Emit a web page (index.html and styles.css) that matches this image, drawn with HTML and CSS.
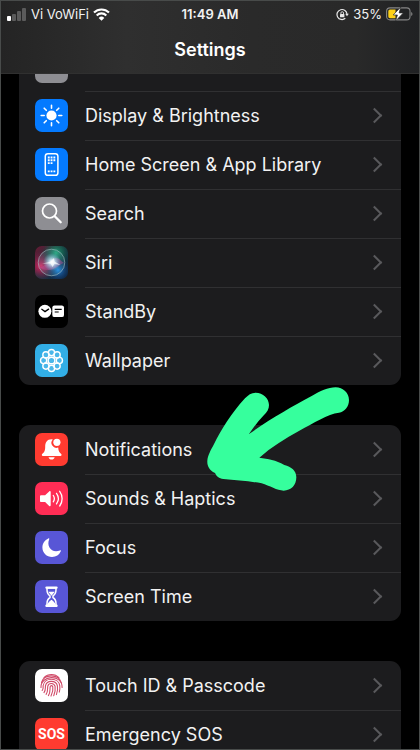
FILE: index.html
```html
<!DOCTYPE html>
<html lang="en">
<head>
  <meta charset="UTF-8">
  <meta name="viewport" content="width=device-width, initial-scale=1.0">
  <title>Settings</title>
  <link rel="stylesheet" href="styles.css">
</head>
<body>
  <div class="screen">
    <header class="header">
      <div class="status-bar">
        <div class="status-left">
          <svg class="signal" width="20" height="13" viewBox="0 0 20 13">
            <rect x="0" y="8" width="4" height="5" rx="1" fill="#fff"/>
            <rect x="5" y="6" width="4" height="7" rx="1" fill="#5b5b5b"/>
            <rect x="10" y="3" width="4" height="10" rx="1" fill="#5b5b5b"/>
            <rect x="15" y="0" width="4" height="13" rx="1" fill="#5b5b5b"/>
          </svg>
          <span>Vi VoWiFi</span>
          <svg width="17" height="13" viewBox="0 0 17 13">
            <path d="M1 4.6a10.6 10.6 0 0 1 15 0M3.7 7.4a6.8 6.8 0 0 1 9.6 0" fill="none" stroke="#fff" stroke-width="2.1"/>
            <path d="M8.5 12.8 5.7 9.9a4 4 0 0 1 5.6 0z" fill="#fff"/>
          </svg>
        </div>
        <span class="time">11:49 AM</span>
        <div class="status-right">
          <svg width="13" height="13" viewBox="0 0 13 13">
            <path d="M11 6.3A5 5 0 1 0 9.3 10.3" fill="none" stroke="#e8e8e8" stroke-width="1.2"/>
            <path d="M9.2 5.8h3.6L11 8.3z" fill="#e8e8e8"/>
            <rect x="4" y="6" width="4.4" height="3.2" rx=".5" fill="#e8e8e8"/>
            <path d="M4.9 6V5a1.3 1.3 0 0 1 2.6 0v1" fill="none" stroke="#e8e8e8" stroke-width=".9"/>
          </svg>
          <span>35%</span>
          <svg class="battery" width="27" height="14" viewBox="0 0 27 14">
            <rect x=".6" y=".9" width="23.4" height="12" rx="3.4" fill="none" stroke="#858585" stroke-width="1.1"/>
            <path d="M25.2 5c1.7.7 1.7 3.2 0 4z" fill="#858585"/>
            <path d="M4 2.5h5.5v8.8H4A1.7 1.7 0 0 1 2.3 9.6V4.2A1.7 1.7 0 0 1 4 2.5z" fill="#fdd017"/>
            <path d="M14.8 0 7.2 8h4.2L9.6 14 17.3 5.9h-4.2z" fill="#fff" stroke="#2b2b2b" stroke-width=".7"/>
          </svg>
        </div>
      </div>
      <h1 class="title">Settings</h1>
    </header>

    <main class="list">
      <section class="group">
        <div class="row">
          <span class="icon gray"></span>
        </div>
        <a class="row" href="#display">
          <svg class="icon blue" viewBox="0 0 33 33">
            <circle cx="16.5" cy="16.5" r="5.1" fill="#fff"/>
            <path d="M16.5 6.2v3M16.5 23.8v3M6.2 16.5h3M23.8 16.5h3M9.2 9.2l2.1 2.1M21.7 21.7l2.1 2.1M9.2 23.8l2.1-2.1M21.7 11.3l2.1-2.1" stroke="#fff" stroke-width="1.6" stroke-linecap="round"/>
          </svg>
          <span class="label">Display &amp; Brightness</span>
        </a>
        <a class="row" href="#home-screen">
          <svg class="icon blue" viewBox="0 0 33 33">
            <rect x="10.3" y="5.7" width="12.6" height="21.6" rx="2.6" fill="none" stroke="#fff" stroke-width="1.5"/>
            <path d="M12.8 9.5h8M12.8 12.3h8M12.8 15.1h5.2M12.8 23.4h8" stroke="#fff" stroke-width="1.9" stroke-dasharray="1.9 .9"/>
          </svg>
          <span class="label">Home Screen &amp; App Library</span>
        </a>
        <a class="row" href="#search">
          <svg class="icon gray" viewBox="0 0 33 33">
            <circle cx="14.5" cy="14" r="7" fill="none" stroke="#fff" stroke-width="1.7"/>
            <path d="M19.7 19.2l6 6" stroke="#fff" stroke-width="2.3" stroke-linecap="round"/>
          </svg>
          <span class="label">Search</span>
        </a>
        <a class="row" href="#siri">
          <svg class="icon" viewBox="0 0 33 33">
            <defs>
              <linearGradient id="siri-bg" x1="0" y1="0" x2="1" y2="1">
                <stop offset="0" stop-color="#6c1733"/>
                <stop offset=".45" stop-color="#18343c"/>
                <stop offset="1" stop-color="#0a2748"/>
              </linearGradient>
              <radialGradient id="siri-glow">
                <stop offset="0" stop-color="#fff"/>
                <stop offset=".25" stop-color="#d8f4ff" stop-opacity=".9"/>
                <stop offset="1" stop-color="#79c8e8" stop-opacity="0"/>
              </radialGradient>
              <radialGradient id="siri-red">
                <stop offset="0" stop-color="#e52463"/>
                <stop offset="1" stop-color="#8a1746" stop-opacity="0"/>
              </radialGradient>
              <radialGradient id="siri-green">
                <stop offset="0" stop-color="#23aa7c"/>
                <stop offset="1" stop-color="#0b5b48" stop-opacity="0"/>
              </radialGradient>
              <radialGradient id="siri-blue">
                <stop offset="0" stop-color="#1b8bea"/>
                <stop offset="1" stop-color="#17306e" stop-opacity="0"/>
              </radialGradient>
            </defs>
            <rect width="33" height="33" fill="url(#siri-bg)"/>
            <circle cx="6" cy="20" r="15" fill="url(#siri-red)"/>
            <circle cx="21" cy="7" r="14" fill="url(#siri-green)"/>
            <circle cx="23" cy="24" r="12" fill="url(#siri-blue)"/>
            <circle cx="16.5" cy="16.5" r="13.3" fill="#69b2bd" fill-opacity=".18" stroke="#a8c3c8" stroke-opacity=".65" stroke-width=".9"/>
            <path d="M4 21c7 1 8-8 17-9 3 0 5 3 8 5-5 1-9 8-17 7-3 0-5-1-8-3z" fill="#c54b99" fill-opacity=".45"/>
            <circle cx="17" cy="16" r="9" fill="url(#siri-glow)"/>
            <path d="M7 17.500l8-1.500 4-4 .5 3.500 6 3.500-6-1-2 3-2-3.500z" fill="#fff" fill-opacity=".7"/>
          </svg>
          <span class="label">Siri</span>
        </a>
        <a class="row" href="#standby">
          <svg class="icon black" viewBox="0 0 33 33">
            <circle cx="9.9" cy="16.3" r="6.5" fill="#fff"/>
            <path d="M6.8 14.3l3.2 2.3 3.6-2.5" fill="none" stroke="#000" stroke-width="1.3" stroke-linecap="round"/>
            <rect x="17.3" y="10.4" width="11.7" height="11.7" rx="2.2" fill="#fff"/>
            <path d="M19.7 14.3h7M19.7 17h4" stroke="#000" stroke-width="1.2"/>
          </svg>
          <span class="label">StandBy</span>
        </a>
        <a class="row" href="#wallpaper">
          <svg class="icon sky" viewBox="0 0 33 33">
            <g fill="#fff" fill-opacity=".12" stroke="#fff" stroke-width="1.4">
              <circle cx="16.5" cy="8.6" r="3.1"/>
              <circle cx="22.1" cy="10.9" r="3.1"/>
              <circle cx="24.4" cy="16.5" r="3.1"/>
              <circle cx="22.1" cy="22.1" r="3.1"/>
              <circle cx="16.5" cy="24.4" r="3.1"/>
              <circle cx="10.9" cy="22.1" r="3.1"/>
              <circle cx="8.6" cy="16.5" r="3.1"/>
              <circle cx="10.9" cy="10.9" r="3.1"/>
              <circle cx="16.5" cy="16.5" r="3.3"/>
            </g>
            <circle cx="16.5" cy="16.5" r="5" fill="none" stroke="#fff" stroke-width="1"/>
          </svg>
          <span class="label">Wallpaper</span>
        </a>
      </section>

      <section class="group">
        <a class="row" href="#notifications">
          <svg class="icon red" viewBox="0 0 33 33">
            <path d="M16.5 6.2c-4.5 0-6.3 3.4-6.3 7.3 0 4.3-.9 5.6-3 7.5-.7.7-.4 2 .7 2h17.600c1.1 0 1.4-1.3.7-2-1.9-1.7-2.8-3-3-6.500a5 5 0 0 1-5.400-8.100 7 7 0 0 0-1.300-.2zM13.500 24.200h6.200c-.5 1.500-1.600 2.300-3.100 2.300s-2.600-.8-3.100-2.300z" fill="#fff"/>
            <circle cx="21.9" cy="9.300" r="3.600" fill="#fff"/>
          </svg>
          <span class="label">Notifications</span>
        </a>
        <a class="row" href="#sounds">
          <svg class="icon pink" viewBox="0 0 33 33">
            <path d="M6.200 13.200h3.900l4.100-3.800c.7-.6 1.500-.3 1.500.6v13.300c0 .9-.8 1.200-1.500.6l-4.100-3.800H6.200c-.7 0-1.200-.5-1.200-1.200v-4.500c0-.7.5-1.200 1.200-1.200z" fill="#fff"/>
            <path d="M18.300 13.500c1.300 1.900 1.300 4.300 0 6.300M21.500 11.400c2.300 3.200 2.300 7.300 0 10.500M24.700 9.300c3.200 4.400 3.200 10.300 0 14.700" fill="none" stroke="#fff" stroke-width="1.300" stroke-linecap="round"/>
          </svg>
          <span class="label">Sounds &amp; Haptics</span>
        </a>
        <a class="row" href="#focus">
          <svg class="icon indigo" viewBox="0 0 33 33">
            <path d="M13.300 7.400c.7-.3 1.200.2.9.9-3.100 7.700 3 14.200 10.700 11.100.7-.3 1.200.3.900.9A9.600 9.600 0 0 1 17 26c-5.300 0-9.600-4.200-9.600-9.500 0-4.200 2.400-7.600 5.900-9.100z" fill="#fff"/>
          </svg>
          <span class="label">Focus</span>
        </a>
        <a class="row" href="#screen-time">
          <svg class="icon indigo" viewBox="0 0 33 33">
            <path d="M11.500 7.600h10M11.500 25.800h10" stroke="#fff" stroke-width="2.400" stroke-linecap="round"/>
            <path d="M12 8v1.800c0 3.100 1.200 5 3 6.100v1.600c-1.800 1.100-3 3-3 6.100v1.800h9v-1.800c0-3.100-1.200-5-3-6.100v-1.600c1.800-1.100 3-3 3-6.100V8z" fill="none" stroke="#fff" stroke-width="1.500"/>
            <path d="M13.200 11.800h6.600l-3.300 4zM12.500 25c.2-2.700 2.400-3.700 4-5.200 1.600 1.500 3.800 2.500 4 5.200z" fill="#fff"/>
          </svg>
          <span class="label">Screen Time</span>
        </a>

        <svg class="arrow" viewBox="51 48 429 318">
          <path d="M437 52c22 0 40 17 40 38 0 20-13 36-30 38-34 4-76 31-119 54-43 23-84 49-120 81 27 4 49 6 75 22 21 5 36 17 36 37 0 24-16 40-38 40-20 0-42-15-66-22-33-6-78-10-115-13-13-1-21-9-25-18-18-9-24-22-23-37 1-16 11-33 19-48 24-47 51-92 94-139 9-10 19-17 32-17 22 0 40 17 40 37 0 12-5 21-17 32-17 18-30 36-43 55 59-42 128-82 188-114 25-14 49-26 72-26z" fill="#36ff9d"/>
        </svg>
      </section>

      <section class="group">
        <a class="row" href="#touch-id">
          <svg class="icon white" viewBox="0 0 33 33">
            <g fill="none" stroke="#d04b69" stroke-width="1.100" stroke-linecap="round">
              <path d="M9 8.600c4.200-4.200 11-4.100 14.900.1"/>
              <path d="M6.500 13.500c2.600-8.800 17-8.800 19.700.1"/>
              <path d="M6 18.500c-.7-12.700 21.500-13.700 21.100 0"/>
              <path d="M7.200 21.500c1.500-1.700.7-3.200 1-5 1.100-8.500 15.700-8.400 16.600.4.200 2 .2 4-.5 6.200"/>
              <path d="M9 23.600c2-2.600 1.100-4.800 1.500-7 1.100-5.600 10.600-5.800 11.900.3.500 3 .2 6-1 8.700"/>
              <path d="M11.100 25.300c2.200-2.900 1.200-5.700 1.700-8.200.8-3.600 6.400-3.600 7.300.3.500 3.200-.1 6.300-1.400 9.300"/>
              <path d="M13.400 26.600c2.300-3.400 1.300-6.300 1.800-8.900.4-1.500 2.300-1.500 2.600.2.500 3.100-.3 6.300-1.800 9.200"/>
            </g>
          </svg>
          <span class="label">Touch ID &amp; Passcode</span>
        </a>
        <a class="row" href="#sos">
          <span class="icon red sos">SOS</span>
          <span class="label">Emergency SOS</span>
        </a>
      </section>
    </main>
  </div>
</body>
</html>
```

FILE: styles.css
```css
* {
  box-sizing: border-box;
}
body {
  margin: 0;
  background: #000;
  color: #f2f2f2;
  font-family: Inter, Roboto, sans-serif;
}
.screen {
  position: relative;
  height: 100vh;
  overflow: hidden;
  border: 1px solid #484b4a;
}
/* nav bar floats over the scrolled list */
.header {
  position: absolute;
  top: 0;
  left: 0;
  right: 0;
  z-index: 1;
  height: 73px;
  background: linear-gradient(90deg, #242424, #2f2f2f 30%, #2a2a2a 60%, #292929 85%, #202123);
  border-bottom: 1px solid #303030;
}
.status-bar {
  display: grid;
  grid-template-columns: 1fr auto 1fr;
  align-items: center;
  height: 26px;
  padding: 0 6px;
  font-size: 13px;
}
.status-left,
.status-right {
  display: flex;
  align-items: center;
  gap: 4px;
}
.status-right {
  justify-content: flex-end;
}
.time {
  font-weight: 600;
}
.title {
  margin: 0;
  padding-top: 11px;
  font-size: 18px;
  line-height: 24px;
  font-weight: 600;
  text-align: center;
  color: #fff;
}
.list {
  display: flex;
  flex-direction: column;
  gap: 40px;
  padding: 41px 18px 0;
}
.group {
  position: relative;
  background: #1c1c1e;
  border-radius: 11px;
}
.row {
  position: relative;
  display: flex;
  align-items: center;
  gap: 17px;
  height: 49px;
  padding: 0 18px 0 16px;
  color: inherit;
  text-decoration: none;
}
.row + .row::before {
  content: "";
  position: absolute;
  top: 0;
  left: 66px;
  right: 0;
  height: 1px;
  background: #303032;
}
a.row::after {
  content: "";
  width: 9px;
  height: 9px;
  margin-right: 3px;
  border-top: 2px solid #59595c;
  border-right: 2px solid #59595c;
  transform: rotate(45deg);
}
.label {
  flex: 1;
  font-size: 18px;
  line-height: 24px;
}
.icon {
  flex: none;
  width: 33px;
  height: 33px;
  border-radius: 7px;
}
.gray { background: #8e8e93; }
.blue { background: #047aff; }
.black { background: #000; }
.sky { background: #32aee6; }
.red { background: #ff3b30; }
.pink { background: #ff2d55; }
.indigo { background: #5856d6; }
.white { background: #fff; }
.sos {
  font-family: "Liberation Sans Narrow", Roboto, sans-serif;
  font-size: 14px;
  font-weight: 700;
  line-height: 33px;
  text-align: center;
  color: #fff;
}
.arrow {
  position: absolute;
  top: -39px;
  left: 188px;
  width: 143px;
  height: 106px;
  pointer-events: none;
}
```
